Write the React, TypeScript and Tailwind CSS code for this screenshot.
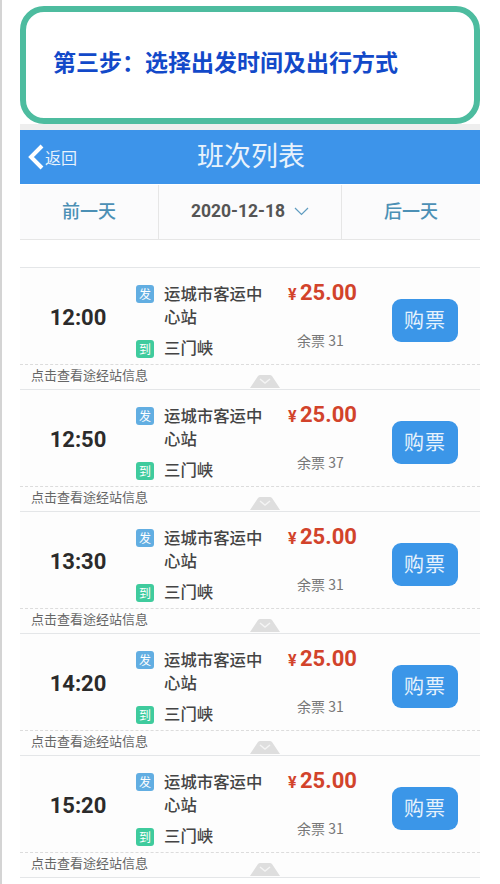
const font = { fontFamily: '"Noto Sans CJK SC", Roboto, sans-serif' };

const trips = [
  { time: "12:00", left: 31 },
  { time: "12:50", left: 37 },
  { time: "13:30", left: 31 },
  { time: "14:20", left: 31 },
  { time: "15:20", left: 31 },
];

function TripRow({ time, left }: { time: string; left: number }) {
  return (
    <div className="h-[122px] border-t border-[#e4e6e8] bg-[#fdfdfd]">
      <div className="h-[97px] flex border-b border-dashed border-[#dcdcdc]">
        <div className="w-[116px] pt-[34px] text-center text-[22px] leading-[32px] font-bold text-[#2b2b2b] font-['Roboto']">
          {time}
        </div>
        <div className="w-[152px] relative pt-[14px] pl-[28px] text-[16.4px] leading-[23px] font-medium text-[#444444]">
          <span className="absolute left-0 top-[17px] w-[18px] h-[18px] rounded-[3px] bg-[#62aee2] text-white text-[12px] leading-[18px] text-center font-normal">
            发
          </span>
          <div>
            运城市客运中
            <br />
            心站
          </div>
          <div className="mt-[8px]">三门峡</div>
          <span className="absolute left-0 top-[72px] w-[18px] h-[18px] rounded-[3px] bg-[#3fcb9d] text-white text-[12px] leading-[18px] text-center font-normal">
            到
          </span>
        </div>
        <div className="w-[104px]">
          <div className="pt-[9px] flex items-baseline font-bold text-[#d2432b] font-['Roboto'] leading-[32px]">
            <span className="text-[16px] w-[12px]">¥</span>
            <span className="text-[22px]">25.00</span>
          </div>
          <div className="mt-[19px] ml-[9px] text-[14px] leading-[20px] text-[#777777]">余票 {left}</div>
        </div>
        <div className="pt-[31px]">
          <div className="w-[66px] h-[43px] rounded-[9px] bg-[#3b96e8] text-[#e6f2fc] text-[20px] leading-[41px] text-center tracking-[1px]">
            购票
          </div>
        </div>
      </div>
      <div className="h-[24px] relative pl-[11px] text-[13px] leading-[20px] text-[#666666]">
        点击查看途经站信息
        <svg className="absolute left-[230px] top-[10px]" width="30" height="13" viewBox="0 0 30 13">
          <path d="M0 13 L8 1 Q9 0 10 0 L20 0 Q21 0 22 1 L30 13 Z" fill="#dedede" />
          <path d="M10 4 L15 8 L20 4" fill="none" stroke="#f4f4f4" strokeWidth="1.5" />
        </svg>
      </div>
    </div>
  );
}

export default function App() {
  return (
    <div className="w-[500px] h-[884px] overflow-hidden bg-white border-l-2 border-[#d4d4d4]" style={font}>
      <div className="w-[460px] ml-[18px]">
        <div className="mt-[6px] h-[118px] rounded-[24px] border-[6px] border-[#4dbc9f] flex items-center pl-[27px] pb-[8px]">
          <span className="text-[23px] font-bold text-[#1249c9] leading-[30px]">第三步：选择出发时间及出行方式</span>
        </div>
        <div className="h-[6px] bg-[#eeeeee]" />
        <div className="h-[54px] bg-[#3d94ea] relative flex items-center justify-center text-white">
          <svg className="absolute left-[7px] top-[13px]" width="18" height="28" viewBox="0 0 18 28">
            <path d="M15 3 L4 14 L15 25" fill="none" stroke="#ffffff" strokeWidth="4" />
          </svg>
          <span className="absolute left-[25px] top-[14px] text-[16px] leading-[26px] text-[#e8f2fc]">返回</span>
          <span className="text-[27px] leading-[36px] -mt-[4px] ml-[2px] text-[#e8f2fc]">班次列表</span>
        </div>
        <div className="mt-[1px] h-[55px] flex bg-[#fbfbfc] border-b border-[#e6e6e6] text-center">
          <div className="w-[139px] border-r border-[#e6e6e6] text-[18px] leading-[50px] font-medium text-[#4c90b5]">前一天</div>
          <div className="w-[183px] border-r border-[#e6e6e6] flex items-center justify-center gap-[9px] pb-[2px] text-[#555555]">
            <span className="text-[17.5px] font-bold font-['Roboto']">2020-12-18</span>
            <svg width="15" height="9" viewBox="0 0 15 9">
              <path d="M1 1 L7.5 7.5 L14 1" fill="none" stroke="#5f9cc0" strokeWidth="1.2" />
            </svg>
          </div>
          <div className="flex-1 text-[18px] leading-[50px] font-medium text-[#4c90b5]">后一天</div>
        </div>
        <div className="h-[27px]" />
        {trips.map((t) => (
          <TripRow key={t.time} time={t.time} left={t.left} />
        ))}
        <div className="border-t border-[#e4e6e8]" />
      </div>
    </div>
  );
}
